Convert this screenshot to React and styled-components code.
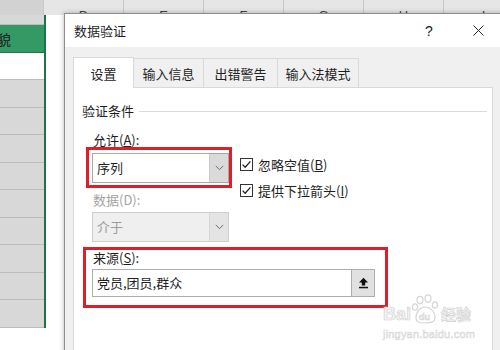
import React from "react";
import styled, { createGlobalStyle } from "styled-components";

const GlobalStyle = createGlobalStyle`
  body {
    margin: 0;
    font-family: "Noto Sans CJK SC", "Noto Sans", sans-serif;
  }
  #root {
    width: 500px;
    height: 350px;
  }
`;

const columns = [
  { key: "A", w: 44, letter: "", selected: true },
  { key: "D", w: 80, letter: "D" },
  { key: "E", w: 80, letter: "E" },
  { key: "F", w: 80, letter: "F" },
  { key: "G", w: 80, letter: "G" },
  { key: "H", w: 80, letter: "H" },
  { key: "I", w: 80, letter: "I" },
];

const rows = [
  { h: 10, kind: "gray" },
  { h: 28, kind: "green", text: "貌" },
  { h: 27, kind: "white" },
  { h: 28, kind: "gray" },
  { h: 27, kind: "gray" },
  { h: 28, kind: "gray" },
  { h: 27, kind: "gray" },
  { h: 28, kind: "gray" },
  { h: 27, kind: "gray" },
  { h: 28, kind: "gray" },
  { h: 27, kind: "gray" },
  { h: 28, kind: "gray" },
];

const tabs = [
  { label: "设置", w: 61, active: true },
  { label: "输入信息", w: 71 },
  { label: "出错警告", w: 75 },
  { label: "输入法模式", w: 82 },
];

function Chevron() {
  return (
    <svg width="9" height="6" viewBox="0 0 9 6">
      <path d="M0.8 1 L4.5 4.6 L8.2 1" stroke="#6a6a6a" strokeWidth="1" fill="none" />
    </svg>
  );
}

function CheckMark() {
  return (
    <svg width="13" height="13" viewBox="0 0 13 13">
      <rect x="0.5" y="0.5" width="12" height="12" fill="#fff" stroke="#333" />
      <path d="M2.6 6.6 L5.2 9.2 L10.4 3.4" stroke="#222" strokeWidth="1.3" fill="none" />
    </svg>
  );
}

function UploadIcon() {
  return (
    <svg width="11" height="12" viewBox="0 0 11 12">
      <path d="M5.5 0.8 L1 5.4 H3.8 V8.4 H7.2 V5.4 H10 Z" fill="#111" />
      <rect x="1" y="9.8" width="9" height="1.5" fill="#111" />
    </svg>
  );
}

function CloseIcon() {
  return (
    <svg width="11" height="11" viewBox="0 0 11 11">
      <path d="M0.5 0.5 L10.5 10.5 M10.5 0.5 L0.5 10.5" stroke="#222" strokeWidth="1" />
    </svg>
  );
}

function Paw() {
  return (
    <svg width="30" height="30" viewBox="0 0 30 30">
      <g fill="none" stroke="#d6d6d6" strokeWidth="1.2">
        <ellipse cx="9" cy="6" rx="3" ry="3.6" />
        <ellipse cx="17" cy="4.5" rx="3" ry="3.6" />
        <ellipse cx="4" cy="13" rx="2.6" ry="3.2" />
        <ellipse cx="24" cy="11" rx="2.6" ry="3.2" />
        <path d="M5 24 C5 17 10 13 14 13 C19 13 24 17 24 24 C24 28 20 29 14.5 29 C8 29 5 28 5 24 Z" />
      </g>
      <text x="8" y="26" fontSize="9" fontFamily="Liberation Sans, sans-serif" fontWeight="bold" fill="#e9e9e9" stroke="#d0d0d0" strokeWidth="0.4">
        du
      </text>
    </svg>
  );
}

function App() {
  return (
    <>
      <GlobalStyle />
      <Sheet>
        <ColumnHeaders>
          {columns.map((c) => (
            <HeaderCell key={c.key} $w={c.w} $selected={c.selected}>
              {c.letter}
            </HeaderCell>
          ))}
        </ColumnHeaders>
        <Grid>
          <SelectedColumn>
            {rows.map((r, i) => (
              <Cell key={i} $h={r.h} $kind={r.kind}>
                {r.text}
              </Cell>
            ))}
          </SelectedColumn>
        </Grid>

        <Dialog>
          <TitleBar>
            <Title>数据验证</Title>
            <Controls>
              <TitleButton>?</TitleButton>
              <TitleButton>
                <CloseIcon />
              </TitleButton>
            </Controls>
          </TitleBar>
          <DialogBody>
            <Tabs>
              {tabs.map((t) => (
                <Tab key={t.label} $w={t.w} $active={t.active}>
                  {t.label}
                </Tab>
              ))}
            </Tabs>
            <Panel>
              <Legend>
                <span>验证条件</span>
                <LegendLine />
              </Legend>
              <Content>
                <Row>
                  <LeftCol>
                    <FieldLabel>
                      允许(<u>A</u>):
                    </FieldLabel>
                    <Highlight $mt={-1} $ml={-6} $w={146} $pad="3px 0 2px 3px">
                      <Combo>
                        <ComboText>序列</ComboText>
                        <ComboButton>
                          <Chevron />
                        </ComboButton>
                      </Combo>
                    </Highlight>
                    <FieldLabel $disabled $mt={4}>
                      数据(D):
                    </FieldLabel>
                    <Combo $disabled $mt={4}>
                      <ComboText $disabled>介于</ComboText>
                      <ComboButton $disabled>
                        <Chevron />
                      </ComboButton>
                    </Combo>
                  </LeftCol>
                  <RightCol>
                    <CheckRow>
                      <CheckMark />
                      <span>
                        忽略空值(<u>B</u>)
                      </span>
                    </CheckRow>
                    <CheckRow>
                      <CheckMark />
                      <span>
                        提供下拉箭头(<u>I</u>)
                      </span>
                    </CheckRow>
                  </RightCol>
                </Row>
                <Highlight $mt={5} $ml={-9} $w={305} $pad="0 10px 8px 6px">
                  <FieldLabel>
                    来源(<u>S</u>):
                  </FieldLabel>
                  <SourceInput>
                    <ComboText>党员,团员,群众</ComboText>
                    <UploadButton>
                      <UploadIcon />
                    </UploadButton>
                  </SourceInput>
                </Highlight>
              </Content>
            </Panel>
          </DialogBody>
        </Dialog>

        <Watermark>
          <Brand>
            <BrandText>Bai</BrandText>
            <Paw />
            <BrandText $cjk>经验</BrandText>
          </Brand>
          <BrandUrl>jingyan.baidu.com</BrandUrl>
        </Watermark>
      </Sheet>
    </>
  );
}

const Sheet = styled.div`
  position: relative;
  width: 500px;
  height: 350px;
  overflow: hidden;
  background: #fff;
`;

const ColumnHeaders = styled.div`
  display: flex;
  height: 15px;
  background: #e6e6e6;
`;

const HeaderCell = styled.div`
  flex: none;
  box-sizing: border-box;
  width: ${(p) => p.$w}px;
  height: ${(p) => (p.$selected ? 15 : 15)}px;
  padding-top: 8px;
  line-height: 13px;
  text-align: center;
  font: 13px "Liberation Sans", sans-serif;
  color: #444;
  background: ${(p) => (p.$selected ? "#d2d2d2" : "#e6e6e6")};
  border-right: 1px solid #c8c8c8;
`;

const Grid = styled.div`
  display: flex;
`;

const SelectedColumn = styled.div`
  width: 44px;
  border-right: 2px solid #217346;
  display: flex;
  flex-direction: column;
`;

const cellColors = {
  gray: "#d8d8d8",
  green: "#339a66",
  white: "#ffffff",
};

const Cell = styled.div`
  box-sizing: border-box;
  height: ${(p) => p.$h}px;
  background: ${(p) => cellColors[p.$kind]};
  border-bottom: 1px solid ${(p) => (p.$kind === "green" ? "#217346" : "#bcbcbc")};
  display: flex;
  align-items: center;
  font-size: 14px;
  color: #1b1b1b;
  text-indent: -3px;
  overflow: hidden;
`;

const Dialog = styled.div`
  position: absolute;
  left: 64px;
  top: 13px;
  width: 444px;
  bottom: -40px;
  box-sizing: border-box;
  border: 1px solid #8e8e8e;
  box-shadow: 0 0 5px rgba(0, 0, 0, 0.28);
  background: #f0f0f0;
  display: flex;
  flex-direction: column;
`;

const TitleBar = styled.div`
  height: 33px;
  flex: none;
  display: flex;
  align-items: center;
  padding-left: 9px;
  background: #fff;
`;

const Title = styled.div`
  font-size: 13px;
  color: #1f1f1f;
`;

const Controls = styled.div`
  margin-left: auto;
  display: flex;
  gap: 9px;
  padding-right: 9px;
`;

const TitleButton = styled.div`
  width: 40px;
  height: 20px;
  display: flex;
  align-items: center;
  justify-content: center;
  font: 14px "Liberation Sans", sans-serif;
  color: #222;
`;

const DialogBody = styled.div`
  flex: 1;
  display: flex;
  flex-direction: column;
  padding: 10px 14px 0 8px;
`;

const Tabs = styled.div`
  display: flex;
  align-items: flex-end;
  height: 30px;
`;

const Tab = styled.div`
  box-sizing: border-box;
  width: ${(p) => p.$w}px;
  height: ${(p) => (p.$active ? 31 : 29)}px;
  margin-right: -1px;
  margin-bottom: ${(p) => (p.$active ? -1 : 0)}px;
  border: 1px solid #d9d9d9;
  border-bottom: none;
  background: ${(p) => (p.$active ? "#fff" : "#f0f0f0")};
  position: relative;
  z-index: ${(p) => (p.$active ? 1 : 0)};
  display: flex;
  align-items: center;
  justify-content: center;
  font-size: 13px;
  color: #1f1f1f;
`;

const Panel = styled.div`
  flex: 1;
  background: #fff;
  border: 1px solid #d9d9d9;
  padding: 15px 5px 0 8px;
`;

const Legend = styled.div`
  display: flex;
  align-items: center;
  height: 16px;
  font-size: 13px;
  line-height: 16px;
  color: #1f1f1f;
`;

const LegendLine = styled.div`
  flex: 1;
  height: 1px;
  margin-left: 5px;
  background: #dcdcdc;
`;

const Content = styled.div`
  margin: 13px 0 0 10px;
`;

const Row = styled.div`
  display: flex;
`;

const LeftCol = styled.div`
  width: 137px;
  display: flex;
  flex-direction: column;
`;

const FieldLabel = styled.div`
  font-size: 13px;
  line-height: 16px;
  padding-left: 1px;
  margin-top: ${(p) => p.$mt || 0}px;
  color: ${(p) => (p.$disabled ? "#a3a3a3" : "#1f1f1f")};
`;

const Highlight = styled.div`
  box-sizing: border-box;
  width: ${(p) => p.$w}px;
  margin-top: ${(p) => p.$mt}px;
  margin-left: ${(p) => p.$ml}px;
  padding: ${(p) => p.$pad};
  border: 3px solid #de1f29;
`;

const Combo = styled.div`
  box-sizing: border-box;
  display: flex;
  height: 30px;
  margin-top: ${(p) => p.$mt || 0}px;
  border: 1px solid ${(p) => (p.$disabled ? "#cfcfcf" : "#a8a8a8")};
  background: ${(p) => (p.$disabled ? "#efefef" : "#fff")};
`;

const ComboText = styled.div`
  flex: 1;
  padding-left: 4px;
  font-size: 13px;
  line-height: 28px;
  color: ${(p) => (p.$disabled ? "#9b9b9b" : "#1f1f1f")};
`;

const ComboButton = styled.div`
  width: 18px;
  display: flex;
  align-items: center;
  justify-content: center;
  background: ${(p) => (p.$disabled ? "#e4e4e4" : "#dadada")};
  border-left: 1px solid ${(p) => (p.$disabled ? "#d6d6d6" : "#cacaca")};
`;

const RightCol = styled.div`
  margin-left: 11px;
  padding-top: 19px;
  display: flex;
  flex-direction: column;
`;

const CheckRow = styled.div`
  height: 26px;
  display: flex;
  align-items: center;
  gap: 5px;
  font-size: 13px;
  color: #1f1f1f;
`;

const SourceInput = styled.div`
  box-sizing: border-box;
  display: flex;
  height: 28px;
  margin-top: 3px;
  border: 1px solid #abadb3;
  background: #fff;

  ${ComboText} {
    line-height: 26px;
  }
`;

const UploadButton = styled.div`
  width: 22px;
  display: flex;
  align-items: center;
  justify-content: center;
  background: #e1e1e1;
  border-left: 1px solid #adadad;
`;

const Watermark = styled.div`
  position: absolute;
  left: 383px;
  top: 293px;
  display: flex;
  flex-direction: column;
  align-items: flex-start;
  pointer-events: none;
`;

const Brand = styled.div`
  display: flex;
  align-items: flex-end;
  height: 31px;
`;

const BrandText = styled.span`
  font: bold ${(p) => (p.$cjk ? 15 : 18)}px ${(p) =>
      p.$cjk ? '"Noto Sans CJK SC"' : '"Liberation Sans"'},
    sans-serif;
  line-height: 20px;
  color: #f4f4f4;
  -webkit-text-stroke: 0.7px #d4d4d4;
`;

const BrandUrl = styled.div`
  margin-top: 4px;
  font: 11px "Liberation Sans", sans-serif;
  color: #f2f2f2;
  -webkit-text-stroke: 0.5px #d6d6d6;
  letter-spacing: 0.2px;
`;

export default App;
